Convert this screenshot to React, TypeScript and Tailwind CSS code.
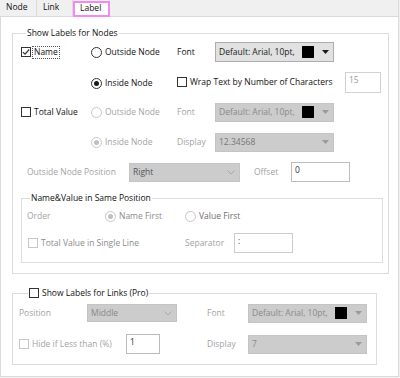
import React from "react";

function Check({ checked = false, disabled = false }: { checked?: boolean; disabled?: boolean }) {
  return (
    <span
      className={
        disabled
          ? "inline-flex w-[10px] h-[10px] border border-[#c8c8c8] bg-white shrink-0 items-center justify-center"
          : "inline-flex w-[10px] h-[10px] border border-[#333333] bg-white shrink-0 items-center justify-center"
      }
    >
      {checked && (
        <svg width="8" height="8" viewBox="0 0 8 8">
          <path d="M0.9 4.1 L3 6.2 L7.2 1.5" fill="none" stroke="#333333" strokeWidth="1.2" />
        </svg>
      )}
    </span>
  );
}

function Radio({ checked = false, disabled = false }: { checked?: boolean; disabled?: boolean }) {
  return (
    <span
      className={
        disabled
          ? "inline-flex w-[11px] h-[11px] rounded-full border border-[#c8c8c8] bg-white shrink-0 items-center justify-center"
          : "inline-flex w-[11px] h-[11px] rounded-full border border-[#333333] bg-white shrink-0 items-center justify-center"
      }
    >
      {checked && (
        <span
          className={
            disabled
              ? "w-[5px] h-[5px] rounded-full bg-[#c0c0c0]"
              : "w-[5px] h-[5px] rounded-full bg-[#1a1a1a]"
          }
        />
      )}
    </span>
  );
}

function Tri({ color }: { color: string }) {
  return (
    <svg width="7" height="4" viewBox="0 0 7 4" className="shrink-0">
      <polygon points="0,0 7,0 3.5,4" fill={color} />
    </svg>
  );
}

function Chev() {
  return (
    <svg width="8" height="5" viewBox="0 0 8 5" className="shrink-0">
      <polyline points="0.5,0.5 4,4 7.5,0.5" fill="none" stroke="#a8a8a8" strokeWidth="1" />
    </svg>
  );
}

function Drop({
  className,
  text,
  swatch = false,
  chev = false,
  disabled = false,
  textClass,
}: {
  className: string;
  text: string;
  swatch?: boolean;
  chev?: boolean;
  disabled?: boolean;
  textClass: string;
}) {
  return (
    <div
      className={
        (disabled
          ? "flex items-center border border-[#c4c4c4] bg-[#cccccc] pl-[3px] pr-[4px] shrink-0 "
          : "flex items-center border border-[#adadad] bg-[#e1e1e1] pl-[3px] pr-[4px] shrink-0 ") + className
      }
    >
      <span className={textClass}>{text}</span>
      <span className="flex-1" />
      {swatch && <span className="w-[12px] h-[12px] bg-black mr-[8px] shrink-0" />}
      {chev ? <Chev /> : <Tri color={disabled ? "#9a9a9a" : "#1a1a1a"} />}
    </div>
  );
}

function Input({ className, text, textClass }: { className: string; text: string; textClass: string }) {
  return (
    <div className={"flex items-start bg-white pl-[3px] pt-[3px] shrink-0 " + className}>
      <span className={textClass}>{text}</span>
    </div>
  );
}

export default function App() {
  const dis = "text-[#a3a3a3]";
  return (
    <div className="w-[400px] h-[378px] bg-[#f0f0f0] font-['Open_Sans',sans-serif] text-[8.5px] text-[#111111] leading-none overflow-hidden">
      {/* tabs */}
      <div className="flex h-[17px]">
        <div className="w-[37px] h-[17px] border-r border-b border-[#dadada] flex items-center pl-[6px] pb-[1px]">
          Node
        </div>
        <div className="w-[36px] h-[17px] border-r border-b border-[#dadada] flex items-center pl-[6px] pb-[1px]">
          Link
        </div>
        <div className="w-[37px] h-[16px] mt-[1px] border-2 border-[#f28af2] bg-white flex items-center pl-[5px] pb-[1px]">
          Label
        </div>
        <div className="w-[289px] h-[17px] border-b border-r border-[#dadada]" />
      </div>
      {/* panel */}
      <div className="w-[399px] h-[360px] border-l border-r border-b border-[#dadada] bg-white pl-[11px] pt-[9px]">
        {/* Nodes group */}
        <fieldset className="w-[377px] h-[248px] border border-[#dcdcdc] pl-[8px]">
          <legend className="ml-[5px] px-[1px] leading-[14px]">Show Labels for Nodes</legend>
          <div className="flex flex-col gap-[10px] mt-[2px]">
            {/* row 1 */}
            <div className="flex items-center h-[20px]">
              <div className="w-[70px] flex items-center">
                <Check checked />
                <span className="ml-[1px] border border-dotted border-[#555555] h-[13px] flex items-center px-[1px]">
                  Name
                </span>
              </div>
              <div className="w-[86px] flex items-center">
                <Radio />
                <span className="ml-[3px]">Outside Node</span>
              </div>
              <div className="w-[38px]">Font</div>
              <Drop className="w-[119px] h-[20px]" text="Default: Arial, 10pt," swatch textClass="text-[#1a1a1a]" />
            </div>
            {/* row 2 */}
            <div className="flex items-center h-[20px]">
              <div className="w-[70px]" />
              <div className="w-[86px] flex items-center mt-[3px]">
                <Radio checked />
                <span className="ml-[3px]">Inside Node</span>
              </div>
              <div className="w-[168px] flex items-center">
                <Check />
                <span className="ml-[3px]">Wrap Text by Number of Characters</span>
              </div>
              <Input className="w-[36px] h-[21px] border border-[#d2d2d2]" text="15" textClass="text-[#9a9a9a]" />
            </div>
            {/* row 3 */}
            <div className="flex items-center h-[20px]">
              <div className="w-[70px] flex items-center">
                <Check />
                <span className="ml-[3px]">Total Value</span>
              </div>
              <div className="w-[86px] flex items-center">
                <Radio disabled />
                <span className={"ml-[3px] " + dis}>Outside Node</span>
              </div>
              <div className={"w-[38px] " + dis}>Font</div>
              <Drop className="w-[119px] h-[19px]" text="Default: Arial, 10pt," swatch disabled textClass="text-[#8a8a8a]" />
            </div>
            {/* row 4 */}
            <div className="flex items-center h-[20px]">
              <div className="w-[70px]" />
              <div className="w-[86px] flex items-center">
                <Radio checked disabled />
                <span className={"ml-[3px] " + dis}>Inside Node</span>
              </div>
              <div className={"w-[38px] " + dis}>Display</div>
              <Drop className="w-[119px] h-[19px]" text="12.34568" disabled textClass="text-[#777777]" />
            </div>
            {/* row 5 */}
            <div className="flex items-center h-[20px]">
              <div className={"w-[108px] pl-[6px] " + dis}>Outside Node Position</div>
              <Drop className="w-[111px] h-[19px]" text="Right" chev disabled textClass="text-[#555555]" />
              <div className={"w-[37px] ml-[14px] " + dis}>Offset</div>
              <Input className="w-[59px] h-[20px] border border-[#bdbdbd]" text="0" textClass="text-[#333333]" />
            </div>
          </div>
          {/* inner group */}
          <fieldset className="mt-[9px] w-[362px] h-[72px] border border-[#dcdcdc] pl-[5px]">
            <legend className="ml-[3px] px-[1px] leading-[14px]">Name&amp;Value in Same Position</legend>
            <div className="flex flex-col gap-[8px] mt-[2px]">
              <div className="flex items-center h-[18px]">
                <div className={"w-[78px] " + dis}>Order</div>
                <div className="w-[80px] flex items-center">
                  <Radio checked disabled />
                  <span className="ml-[3px] text-[#8c8c8c]">Name First</span>
                </div>
                <div className="flex items-center">
                  <Radio disabled />
                  <span className="ml-[3px] text-[#6e6e6e]">Value First</span>
                </div>
              </div>
              <div className="flex items-center h-[20px]">
                <div className="w-[158px] flex items-center pl-[1px]">
                  <Check disabled />
                  <span className="ml-[3px] text-[#8c8c8c]">Total Value in Single Line</span>
                </div>
                <div className={"w-[49px] " + dis}>Separator</div>
                <Input className="w-[59px] h-[20px] border border-[#cccccc]" text=":" textClass="text-[#333333]" />
              </div>
            </div>
          </fieldset>
        </fieldset>
        {/* Links group */}
        <fieldset className="mt-[12px] w-[365px] h-[79px] border border-[#dcdcdc] pl-[6px]">
          <legend className="ml-[9px] px-[1px] leading-[14px] flex items-center h-[14px]">
            <Check />
            <span className="ml-[3px]">Show Labels for Links (Pro)</span>
          </legend>
          <div className="flex flex-col gap-[12px] mt-[4px]">
            <div className="flex items-center h-[18px]">
              <div className={"w-[68px] " + dis}>Position</div>
              <Drop className="w-[90px] h-[18px]" text="Middle" chev disabled textClass="text-[#888888]" />
              <div className={"w-[41px] ml-[30px] " + dis}>Font</div>
              <Drop className="w-[119px] h-[19px]" text="Default: Arial, 10pt," swatch disabled textClass="text-[#8a8a8a]" />
            </div>
            <div className="flex items-center h-[20px]">
              <div className="w-[107px] flex items-center">
                <Check disabled />
                <span className={"ml-[3px] " + dis}>Hide if Less than (%)</span>
              </div>
              <Input className="w-[34px] h-[20px] border border-[#bbbbbb]" text="1" textClass="text-[#333333]" />
              <div className={"w-[41px] ml-[47px] " + dis}>Display</div>
              <Drop className="w-[119px] h-[19px]" text="7" disabled textClass="text-[#888888]" />
            </div>
          </div>
        </fieldset>
      </div>
    </div>
  );
}
